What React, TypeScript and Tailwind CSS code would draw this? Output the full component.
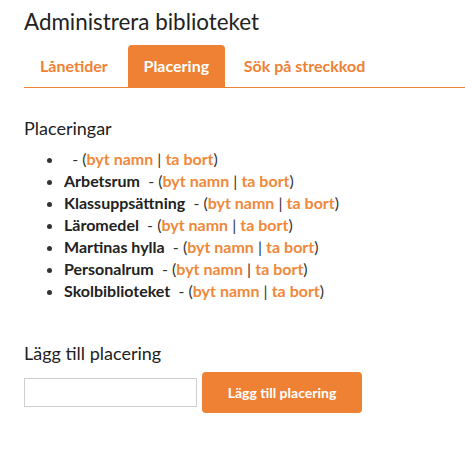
import React from 'react';

const places = ['', 'Arbetsrum', 'Klassuppsättning', 'Läromedel', 'Martinas hylla', 'Personalrum', 'Skolbiblioteket'];

function PlaceRow({ name }: { name: string }) {
  return (
    <li className="h-[22px] leading-[22px]">
      <span className="font-bold text-[#222]">{name}</span>
      <span className="whitespace-pre">{'  - ('}</span>
      <a className="text-[#f0883a] font-bold cursor-pointer">byt namn</a>
      <span> | </span>
      <a className="text-[#f0883a] font-bold cursor-pointer">ta bort</a>
      <span>)</span>
    </li>
  );
}

export default function App() {
  return (
    <div className="min-h-[458px] w-[465px] bg-white pl-6 pt-[7px] text-[#333]" style={{ fontFamily: 'Lato, "Open Sans", sans-serif' }}>
      <h1 className="text-[22.4px] leading-[30px] text-[#222]">Administrera biblioteket</h1>

      <div className="mt-[8px] flex border-b border-[#ee8134]">
        <div className="flex h-[42px] items-center px-4 text-[16px] font-bold text-[#ee8134]">Lånetider</div>
        <div className="ml-[4px] flex h-[42px] w-[97px] items-center justify-center rounded-t-[4px] bg-[#ee8134] text-[16px] font-bold text-white">
          Placering
        </div>
        <div className="flex h-[42px] items-center px-[19px] text-[16px] font-bold text-[#ee8134]">Sök på streckkod</div>
      </div>

      <h2 className="mt-[29px] text-[18px] leading-[22px] text-[#222]">Placeringar</h2>
      <ul className="mt-[9px] list-disc pl-[40px] text-[16px] text-[#333]">
        {places.map((p, i) => (
          <PlaceRow key={i} name={p} />
        ))}
      </ul>

      <h2 className="mt-[40px] text-[18px] leading-[22px] text-[#222]">Lägg till placering</h2>
      <div className="mt-[8px] flex items-center gap-[5px]">
        <input type="text" className="h-[29px] w-[173px] border border-[#cfcfcf] bg-white px-2 text-[14px] outline-none" />
        <button className="h-[41px] w-[160px] rounded-[4px] bg-[#ee8134] text-[14px] font-bold text-white">Lägg till placering</button>
      </div>
    </div>
  );
}
